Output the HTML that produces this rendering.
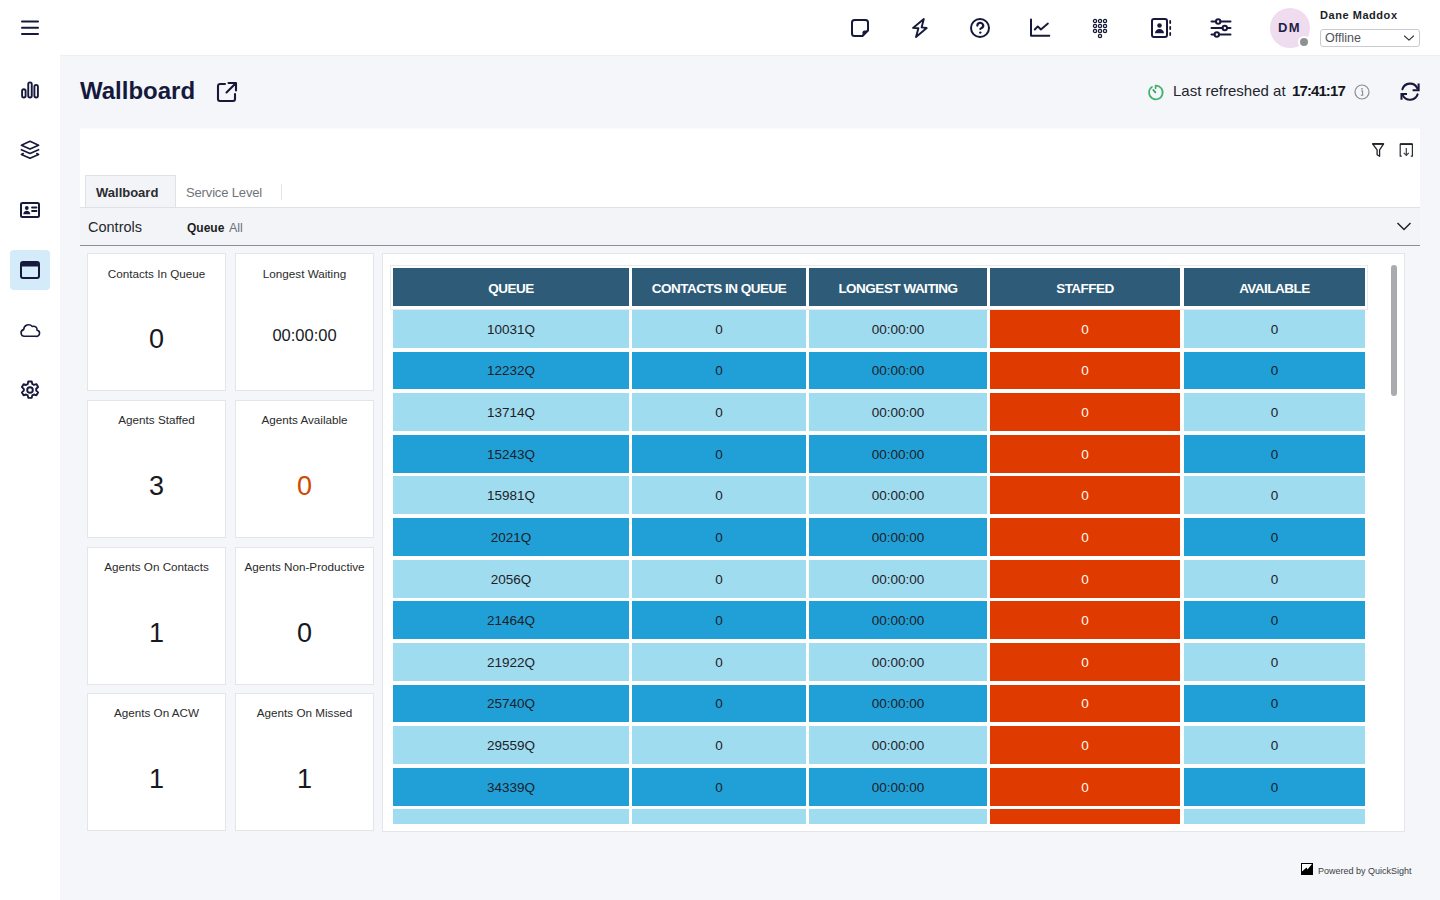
<!DOCTYPE html>
<html><head><meta charset="utf-8">
<style>
*{box-sizing:border-box;margin:0;padding:0}
html,body{width:1440px;height:900px;overflow:hidden;background:#f5f6f9;font-family:"Liberation Sans",sans-serif;color:#16193b}
.abs{position:absolute}
#top{position:absolute;left:0;top:0;width:1440px;height:56px;background:#fff;border-bottom:1px solid #eeeff1}
#side{position:absolute;left:0;top:55px;width:60px;height:845px;background:#fff}
svg{position:absolute;overflow:visible}
.ic{fill:none;stroke:#16193b;stroke-width:2;stroke-linecap:round;stroke-linejoin:round}
.txt{position:absolute;white-space:nowrap;line-height:1}
#card{position:absolute;left:80px;top:129px;width:1340px;height:79px;background:#fff;box-shadow:0 -1px 0 #f9fafb}
#ctrl{position:absolute;left:80px;top:207px;width:1340px;height:39px;background:#f3f4f7;border-top:1px solid #dfe1e5;border-bottom:1px solid #8b8f96}
.kpi{position:absolute;background:#fff;border:1px solid #e3e5e8}
.kpi .t{position:absolute;left:0;right:0;text-align:center;font-size:11.7px;color:#2b2b2b;white-space:nowrap;line-height:1}
.kpi .v{position:absolute;left:0;right:0;text-align:center;color:#16191f;white-space:nowrap;line-height:1}
#tbl{position:absolute;left:382px;top:253px;width:1023px;height:579px;background:#fff;border:1px solid #e3e5e8}
.c{position:absolute;text-align:center;font-size:13.5px;color:#1d2127;white-space:nowrap}
.h{position:absolute;text-align:center;font-size:13.5px;letter-spacing:-.5px;font-weight:bold;color:#fff;background:#2d5b78;white-space:nowrap}

</style></head>
<body>
<div id="top"></div>
<svg style="left:20px;top:19px" width="20" height="18" viewBox="0 0 20 18"><path class="ic" d="M2 2.4h16M2 8.7h16M2 15h16"/></svg>
<svg style="left:850px;top:18px" width="20" height="20" viewBox="0 0 20 20"><path class="ic" d="M4.5 2h11a2.5 2.5 0 0 1 2.5 2.5v8l-5.5 5.5h-8A2.5 2.5 0 0 1 2 15.5v-11A2.5 2.5 0 0 1 4.5 2z"/><path d="M18 12.5h-3.5a2 2 0 0 0-2 2V18z" fill="#16193b"/></svg>
<svg style="left:910px;top:18px" width="20" height="20" viewBox="0 0 20 20"><path class="ic" style="stroke-width:1.9" d="M13.8 1 L3 9.9 L8.4 10.2 L6 19 L16.7 10 L11.6 9.4 Z"/></svg>
<svg style="left:970px;top:18px" width="20" height="20" viewBox="0 0 20 20"><circle class="ic" cx="10" cy="10" r="9"/><path class="ic" style="stroke-width:2.2" d="M7.4 7.6a2.9 2.7 0 1 1 4.3 2.3c-.9.5-1.4.7-1.4 1.1"/><circle cx="10.3" cy="14.6" r="1.2" fill="#16193b"/></svg>
<svg style="left:1030px;top:18px" width="20" height="20" viewBox="0 0 20 20"><path class="ic" d="M1 1.5v16.2h18.3"/><path class="ic" style="stroke-width:1.9" d="M4.8 11.5l3-3.1 3.1 3.1 7-5.9"/></svg>
<svg style="left:1092px;top:18px" width="16" height="21" viewBox="0 0 16 21"><g fill="none" stroke="#16193b" stroke-width="1.3"><circle cx="3" cy="3" r="1.6"/><circle cx="8" cy="3" r="1.6"/><circle cx="13" cy="3" r="1.6"/><circle cx="3" cy="8" r="1.6"/><circle cx="8" cy="8" r="1.6"/><circle cx="13" cy="8" r="1.6"/><circle cx="3" cy="13" r="1.6"/><circle cx="8" cy="13" r="1.6"/><circle cx="13" cy="13" r="1.6"/><circle cx="8" cy="18" r="1.6"/></g></svg>
<svg style="left:1150px;top:18px" width="22" height="20" viewBox="0 0 22 20"><rect class="ic" x="2" y="1" width="15" height="18" rx="2"/><circle cx="9.5" cy="7.5" r="2.3" fill="#16193b"/><path d="M5 15.2c0-2.6 2-4.3 4.5-4.3s4.5 1.7 4.5 4.3z" fill="#16193b"/><path class="ic" style="stroke-width:1.8" d="M20.2 3v2M20.2 9v2M20.2 15v2"/></svg>
<svg style="left:1210px;top:18px" width="22" height="20" viewBox="0 0 22 20"><path class="ic" d="M1.5 3.5h4.5M10.5 3.5h10M1.5 10h11M17 10h3.5M1.5 16.5h3M9 16.5h11.5"/><circle class="ic" cx="8.2" cy="3.5" r="2.2"/><circle class="ic" cx="14.8" cy="10" r="2.2"/><circle class="ic" cx="6.8" cy="16.5" r="2.2"/></svg>
<div class="abs" style="left:1270px;top:8px;width:40px;height:40px;border-radius:50%;background:#f0dcef"></div>
<div class="txt" style="left:1278px;top:21px;font-size:13px;font-weight:bold;color:#1d1f45;letter-spacing:1.4px">DM</div>
<div class="abs" style="left:1298px;top:36px;width:12px;height:12px;border-radius:50%;background:#8f9092;border:2.5px solid #fff"></div>
<div class="txt" style="left:1320px;top:10px;font-size:11px;font-weight:bold;color:#1b1c2a;letter-spacing:.55px">Dane Maddox</div>
<div class="abs" style="left:1320px;top:29px;width:100px;height:18px;border:1px solid #c9cbd0;border-radius:3px;background:#fff"></div>
<div class="txt" style="left:1325px;top:32px;font-size:12.5px;color:#50535a">Offline</div>
<svg style="left:1403px;top:33px" width="12" height="10" viewBox="0 0 12 10"><path class="ic" style="stroke-width:1.1;stroke:#333" d="M1.5 3l4.5 4.2L10.5 3"/></svg>
<div id="side"></div>
<div class="abs" style="left:10px;top:250px;width:40px;height:40px;border-radius:4px;background:#d4ecf9"></div>
<svg style="left:20px;top:80px" width="20" height="20" viewBox="0 0 20 20"><rect class="ic" style="stroke-width:1.9" x="2.1" y="9.3" width="3.5" height="8.3" rx="1.75"/><rect class="ic" style="stroke-width:1.9" x="8.25" y="2.4" width="3.5" height="15.2" rx="1.75"/><rect class="ic" style="stroke-width:1.9" x="14.4" y="4.9" width="3.5" height="12.7" rx="1.75"/></svg>
<svg style="left:20px;top:140px" width="20" height="20" viewBox="0 0 20 20"><path class="ic" style="stroke-width:1.6" d="M10 1.3l8.6 4L10 9.1 1.4 5.3z"/><path class="ic" style="stroke-width:1.6" d="M1.4 9.7L10 13.5l8.6-3.8"/><path class="ic" style="stroke-width:1.6" d="M3.2 13.5L1.4 14.4 10 18.3l8.6-3.9-1.8-.9"/></svg>
<svg style="left:20px;top:200px" width="20" height="20" viewBox="0 0 20 20"><rect class="ic" x="1" y="3" width="18" height="14" rx="1.5"/><circle cx="6.8" cy="8" r="1.9" fill="#16193b"/><path d="M3.3 14.3c0-2.3 1.6-3.6 3.5-3.6s3.5 1.3 3.5 3.6z" fill="#16193b"/><path class="ic" style="stroke-width:1.8" d="M12 7.5h4.5M12 11h4.5"/></svg>
<svg style="left:20px;top:260px" width="20" height="20" viewBox="0 0 20 20"><rect class="ic" x="1" y="2" width="18" height="16" rx="2"/><path d="M2 3.5a1.5 1.5 0 0 1 1.5-1.5h13a1.5 1.5 0 0 1 1.5 1.5V6.5H2z" fill="#16193b"/></svg>
<svg style="left:20px;top:320px" width="20" height="20" viewBox="0 0 20 20"><path class="ic" style="stroke-width:1.6" d="M4.3 16.3A3.4 3.4 0 0 1 3.7 9.6 A4.9 4.9 0 0 1 12.3 6.5 A3.4 3.4 0 0 1 17 10.2 A3.1 3.1 0 0 1 15.8 16.3Z"/></svg>
<svg style="left:20px;top:380px" width="20" height="20" viewBox="0 0 20 20"><path class="ic" style="stroke-width:1.9" d="M8.3 1.5h3.4l.6 2.5 1.6.9 2.5-.8 1.7 2.9-1.9 1.8v1.8l1.9 1.8-1.7 2.9-2.5-.8-1.6.9-.6 2.5H8.3l-.6-2.5-1.6-.9-2.5.8-1.7-2.9 1.9-1.8V8.9L1.9 7.1 3.6 4.2l2.5.8 1.6-.9z"/><circle class="ic" style="stroke-width:1.9" cx="10" cy="10" r="2.8"/></svg>
<div class="txt" style="left:80px;top:79px;font-size:24px;font-weight:bold;color:#151a3c">Wallboard</div>
<svg style="left:216px;top:81px" width="22" height="22" viewBox="0 0 22 22"><path class="ic" style="stroke-width:2.1" d="M9 3H4a2 2 0 0 0-2 2v13a2 2 0 0 0 2 2h13a2 2 0 0 0 2-2v-5"/><path class="ic" style="stroke-width:2.1" d="M12.5 2H20v7.5M19.5 2.5L10.5 11.5"/></svg>
<svg style="left:1147px;top:84px" width="17" height="17" viewBox="0 0 17 17"><path fill="none" stroke="#3db368" stroke-width="1.7" stroke-linecap="round" stroke-linejoin="round" d="M5 2.9A6.8 6.8 0 1 0 8.6 1.7v2.6"/><path fill="none" stroke="#3a9a5e" stroke-width="1.7" stroke-linecap="round" d="M8.4 8.4L6.3 6"/></svg>
<div class="txt" style="left:1173px;top:83px;font-size:15px;color:#22252d">Last refreshed at</div>
<div class="txt" style="left:1292px;top:83px;font-size:15px;font-weight:bold;color:#16181d;letter-spacing:-.9px">17:41:17</div>
<svg style="left:1354px;top:84px" width="16" height="16" viewBox="0 0 16 16"><circle cx="8" cy="8" r="7" fill="none" stroke="#8a8d93" stroke-width="1.2"/><circle cx="8" cy="4.8" r=".9" fill="#8a8d93"/><path d="M7 7h1.6v4.2M6.8 11.3h2.6" fill="none" stroke="#8a8d93" stroke-width="1.1"/></svg>
<svg style="left:1400px;top:82px" width="20" height="20" viewBox="0 0 20 20"><path class="ic" style="stroke-width:2.1" d="M2.4 7.3A8 8 0 0 1 17.3 6.2"/><path class="ic" style="stroke-width:2.1;stroke-linecap:butt;stroke-linejoin:miter" d="M18.6 1.4V8.3H12.6"/><path class="ic" style="stroke-width:2.1" d="M17.6 12.4A8 8 0 0 1 2.9 13.4"/><path class="ic" style="stroke-width:2.1;stroke-linecap:butt;stroke-linejoin:miter" d="M1.5 17.8V12H7"/></svg>
<div id="card"></div>
<svg style="left:1370px;top:142px" width="16" height="16" viewBox="0 0 16 16"><path fill="none" stroke="#1f2226" stroke-width="1.3" stroke-linejoin="round" d="M2.6 1.8h11L9.6 7.8v6.5L7.1 12.8V7.8z"/><path stroke="#1f2226" stroke-width="1.8" d="M2.6 1.9h11"/></svg>
<svg style="left:1398px;top:142px" width="16" height="16" viewBox="0 0 16 16"><path fill="none" stroke="#2a2d31" stroke-width="1.2" stroke-linejoin="round" d="M3.8 14.2H2.2V2h12.2v12.2h-1.6"/><path stroke="#1f2226" stroke-width="1.8" d="M2.2 2.1h12.2"/><path fill="none" stroke="#3a3d42" stroke-width="1.2" d="M8.3 6v7.5M5.8 10.8l2.5 2.6 2.5-2.6"/></svg>
<div class="abs" style="left:85px;top:175px;width:91px;height:33px;background:#f3f4f7;border:1px solid #dfe1e5;border-bottom:none"></div>
<div class="txt" style="left:96px;top:186px;font-size:13px;font-weight:bold;color:#2a2c30">Wallboard</div>
<div class="txt" style="left:186px;top:186px;font-size:13px;color:#6f7379;letter-spacing:-.15px">Service Level</div>
<div class="abs" style="left:281px;top:184px;width:1px;height:16px;background:#e3e5e8"></div>
<div id="ctrl"></div>
<div class="txt" style="left:88px;top:220px;font-size:14.5px;color:#24272d">Controls</div>
<div class="txt" style="left:187px;top:222px;font-size:12px;font-weight:bold;color:#1b1d22">Queue</div>
<div class="txt" style="left:229px;top:222px;font-size:12.5px;color:#6d7177">All</div>
<svg style="left:1395px;top:219px" width="18" height="14" viewBox="0 0 18 14"><path fill="none" stroke="#1f2226" stroke-width="1.5" d="M2.5 4l6.5 6.5L15.5 4"/></svg>
<div class="kpi" style="left:87px;top:253px;width:139px;height:138px"><div class="t" style="top:13.8px">Contacts In Queue</div><div class="v" style="top:71.8px;font-size:27px;color:#16191f">0</div></div>
<div class="kpi" style="left:235px;top:253px;width:139px;height:138px"><div class="t" style="top:13.8px">Longest Waiting</div><div class="v" style="top:72.6px;font-size:16.5px;color:#16191f">00:00:00</div></div>
<div class="kpi" style="left:87px;top:400px;width:139px;height:138px"><div class="t" style="top:12.8px">Agents Staffed</div><div class="v" style="top:71.8px;font-size:27px;color:#16191f">3</div></div>
<div class="kpi" style="left:235px;top:400px;width:139px;height:138px"><div class="t" style="top:12.8px">Agents Available</div><div class="v" style="top:71.8px;font-size:27px;color:#d04a02">0</div></div>
<div class="kpi" style="left:87px;top:547px;width:139px;height:138px"><div class="t" style="top:12.8px">Agents On Contacts</div><div class="v" style="top:71.8px;font-size:27px;color:#16191f">1</div></div>
<div class="kpi" style="left:235px;top:547px;width:139px;height:138px"><div class="t" style="top:12.8px">Agents Non-Productive</div><div class="v" style="top:71.8px;font-size:27px;color:#16191f">0</div></div>
<div class="kpi" style="left:87px;top:693px;width:139px;height:138px"><div class="t" style="top:12.8px">Agents On ACW</div><div class="v" style="top:71.8px;font-size:27px;color:#16191f">1</div></div>
<div class="kpi" style="left:235px;top:693px;width:139px;height:138px"><div class="t" style="top:12.8px">Agents On Missed</div><div class="v" style="top:71.8px;font-size:27px;color:#16191f">1</div></div>
<div id="tbl"></div>
<div class="abs" style="left:390px;top:265px;width:978px;height:45px;border:1px solid #e8eaee;background:#fff"></div>
<div class="h" style="left:393px;top:268px;width:236px;height:38px;line-height:42px">QUEUE</div>
<div class="h" style="left:632px;top:268px;width:174px;height:38px;line-height:42px">CONTACTS IN QUEUE</div>
<div class="h" style="left:809px;top:268px;width:178px;height:38px;line-height:42px">LONGEST WAITING</div>
<div class="h" style="left:990px;top:268px;width:190px;height:38px;line-height:42px">STAFFED</div>
<div class="h" style="left:1184px;top:268px;width:181px;height:38px;line-height:42px">AVAILABLE</div>
<div class="abs" style="left:382px;top:308px;width:1000px;height:516px;overflow:hidden">
<div class="c" style="left:11px;top:2px;width:236px;height:38px;line-height:39px;background:#a0dcef;color:#1d2127">10031Q</div>
<div class="c" style="left:250px;top:2px;width:174px;height:38px;line-height:39px;background:#a0dcef;color:#1d2127">0</div>
<div class="c" style="left:427px;top:2px;width:178px;height:38px;line-height:39px;background:#a0dcef;color:#1d2127">00:00:00</div>
<div class="c" style="left:608px;top:2px;width:190px;height:38px;line-height:39px;background:#df3b00;color:#fffaf2">0</div>
<div class="c" style="left:802px;top:2px;width:181px;height:38px;line-height:39px;background:#a0dcef;color:#1d2127">0</div>
<div class="c" style="left:11px;top:44px;width:236px;height:37px;line-height:38px;background:#21a0d8;color:#1d2127">12232Q</div>
<div class="c" style="left:250px;top:44px;width:174px;height:37px;line-height:38px;background:#21a0d8;color:#1d2127">0</div>
<div class="c" style="left:427px;top:44px;width:178px;height:37px;line-height:38px;background:#21a0d8;color:#1d2127">00:00:00</div>
<div class="c" style="left:608px;top:44px;width:190px;height:37px;line-height:38px;background:#df3b00;color:#fffaf2">0</div>
<div class="c" style="left:802px;top:44px;width:181px;height:37px;line-height:38px;background:#21a0d8;color:#1d2127">0</div>
<div class="c" style="left:11px;top:85px;width:236px;height:38px;line-height:39px;background:#a0dcef;color:#1d2127">13714Q</div>
<div class="c" style="left:250px;top:85px;width:174px;height:38px;line-height:39px;background:#a0dcef;color:#1d2127">0</div>
<div class="c" style="left:427px;top:85px;width:178px;height:38px;line-height:39px;background:#a0dcef;color:#1d2127">00:00:00</div>
<div class="c" style="left:608px;top:85px;width:190px;height:38px;line-height:39px;background:#df3b00;color:#fffaf2">0</div>
<div class="c" style="left:802px;top:85px;width:181px;height:38px;line-height:39px;background:#a0dcef;color:#1d2127">0</div>
<div class="c" style="left:11px;top:127px;width:236px;height:38px;line-height:39px;background:#21a0d8;color:#1d2127">15243Q</div>
<div class="c" style="left:250px;top:127px;width:174px;height:38px;line-height:39px;background:#21a0d8;color:#1d2127">0</div>
<div class="c" style="left:427px;top:127px;width:178px;height:38px;line-height:39px;background:#21a0d8;color:#1d2127">00:00:00</div>
<div class="c" style="left:608px;top:127px;width:190px;height:38px;line-height:39px;background:#df3b00;color:#fffaf2">0</div>
<div class="c" style="left:802px;top:127px;width:181px;height:38px;line-height:39px;background:#21a0d8;color:#1d2127">0</div>
<div class="c" style="left:11px;top:168px;width:236px;height:38px;line-height:39px;background:#a0dcef;color:#1d2127">15981Q</div>
<div class="c" style="left:250px;top:168px;width:174px;height:38px;line-height:39px;background:#a0dcef;color:#1d2127">0</div>
<div class="c" style="left:427px;top:168px;width:178px;height:38px;line-height:39px;background:#a0dcef;color:#1d2127">00:00:00</div>
<div class="c" style="left:608px;top:168px;width:190px;height:38px;line-height:39px;background:#df3b00;color:#fffaf2">0</div>
<div class="c" style="left:802px;top:168px;width:181px;height:38px;line-height:39px;background:#a0dcef;color:#1d2127">0</div>
<div class="c" style="left:11px;top:210px;width:236px;height:38px;line-height:39px;background:#21a0d8;color:#1d2127">2021Q</div>
<div class="c" style="left:250px;top:210px;width:174px;height:38px;line-height:39px;background:#21a0d8;color:#1d2127">0</div>
<div class="c" style="left:427px;top:210px;width:178px;height:38px;line-height:39px;background:#21a0d8;color:#1d2127">00:00:00</div>
<div class="c" style="left:608px;top:210px;width:190px;height:38px;line-height:39px;background:#df3b00;color:#fffaf2">0</div>
<div class="c" style="left:802px;top:210px;width:181px;height:38px;line-height:39px;background:#21a0d8;color:#1d2127">0</div>
<div class="c" style="left:11px;top:252px;width:236px;height:38px;line-height:39px;background:#a0dcef;color:#1d2127">2056Q</div>
<div class="c" style="left:250px;top:252px;width:174px;height:38px;line-height:39px;background:#a0dcef;color:#1d2127">0</div>
<div class="c" style="left:427px;top:252px;width:178px;height:38px;line-height:39px;background:#a0dcef;color:#1d2127">00:00:00</div>
<div class="c" style="left:608px;top:252px;width:190px;height:38px;line-height:39px;background:#df3b00;color:#fffaf2">0</div>
<div class="c" style="left:802px;top:252px;width:181px;height:38px;line-height:39px;background:#a0dcef;color:#1d2127">0</div>
<div class="c" style="left:11px;top:293px;width:236px;height:38px;line-height:39px;background:#21a0d8;color:#1d2127">21464Q</div>
<div class="c" style="left:250px;top:293px;width:174px;height:38px;line-height:39px;background:#21a0d8;color:#1d2127">0</div>
<div class="c" style="left:427px;top:293px;width:178px;height:38px;line-height:39px;background:#21a0d8;color:#1d2127">00:00:00</div>
<div class="c" style="left:608px;top:293px;width:190px;height:38px;line-height:39px;background:#df3b00;color:#fffaf2">0</div>
<div class="c" style="left:802px;top:293px;width:181px;height:38px;line-height:39px;background:#21a0d8;color:#1d2127">0</div>
<div class="c" style="left:11px;top:335px;width:236px;height:38px;line-height:39px;background:#a0dcef;color:#1d2127">21922Q</div>
<div class="c" style="left:250px;top:335px;width:174px;height:38px;line-height:39px;background:#a0dcef;color:#1d2127">0</div>
<div class="c" style="left:427px;top:335px;width:178px;height:38px;line-height:39px;background:#a0dcef;color:#1d2127">00:00:00</div>
<div class="c" style="left:608px;top:335px;width:190px;height:38px;line-height:39px;background:#df3b00;color:#fffaf2">0</div>
<div class="c" style="left:802px;top:335px;width:181px;height:38px;line-height:39px;background:#a0dcef;color:#1d2127">0</div>
<div class="c" style="left:11px;top:377px;width:236px;height:37px;line-height:38px;background:#21a0d8;color:#1d2127">25740Q</div>
<div class="c" style="left:250px;top:377px;width:174px;height:37px;line-height:38px;background:#21a0d8;color:#1d2127">0</div>
<div class="c" style="left:427px;top:377px;width:178px;height:37px;line-height:38px;background:#21a0d8;color:#1d2127">00:00:00</div>
<div class="c" style="left:608px;top:377px;width:190px;height:37px;line-height:38px;background:#df3b00;color:#fffaf2">0</div>
<div class="c" style="left:802px;top:377px;width:181px;height:37px;line-height:38px;background:#21a0d8;color:#1d2127">0</div>
<div class="c" style="left:11px;top:418px;width:236px;height:38px;line-height:39px;background:#a0dcef;color:#1d2127">29559Q</div>
<div class="c" style="left:250px;top:418px;width:174px;height:38px;line-height:39px;background:#a0dcef;color:#1d2127">0</div>
<div class="c" style="left:427px;top:418px;width:178px;height:38px;line-height:39px;background:#a0dcef;color:#1d2127">00:00:00</div>
<div class="c" style="left:608px;top:418px;width:190px;height:38px;line-height:39px;background:#df3b00;color:#fffaf2">0</div>
<div class="c" style="left:802px;top:418px;width:181px;height:38px;line-height:39px;background:#a0dcef;color:#1d2127">0</div>
<div class="c" style="left:11px;top:460px;width:236px;height:38px;line-height:39px;background:#21a0d8;color:#1d2127">34339Q</div>
<div class="c" style="left:250px;top:460px;width:174px;height:38px;line-height:39px;background:#21a0d8;color:#1d2127">0</div>
<div class="c" style="left:427px;top:460px;width:178px;height:38px;line-height:39px;background:#21a0d8;color:#1d2127">00:00:00</div>
<div class="c" style="left:608px;top:460px;width:190px;height:38px;line-height:39px;background:#df3b00;color:#fffaf2">0</div>
<div class="c" style="left:802px;top:460px;width:181px;height:38px;line-height:39px;background:#21a0d8;color:#1d2127">0</div>
<div class="c" style="left:11px;top:501px;width:236px;height:38px;line-height:39px;background:#a0dcef;color:rgba(255,255,255,.55)">35000Q</div>
<div class="c" style="left:250px;top:501px;width:174px;height:38px;line-height:39px;background:#a0dcef;color:rgba(255,255,255,.55)">0</div>
<div class="c" style="left:427px;top:501px;width:178px;height:38px;line-height:39px;background:#a0dcef;color:rgba(255,255,255,.55)">00:00:00</div>
<div class="c" style="left:608px;top:501px;width:190px;height:38px;line-height:39px;background:#df3b00;color:rgba(255,255,255,.55)">0</div>
<div class="c" style="left:802px;top:501px;width:181px;height:38px;line-height:39px;background:#a0dcef;color:rgba(255,255,255,.55)">0</div>
</div>
<div class="abs" style="left:1391px;top:265px;width:6px;height:131px;border-radius:3px;background:#a9abae"></div>
<svg style="left:1301px;top:863px" width="13" height="12" viewBox="0 0 13 12"><rect x="0" y="0" width="12" height="12" fill="#000"/><path d="M1 1h10L6.5 6.5 5.6 4.6 1 8.5z" fill="#fff"/></svg>
<div class="txt" style="left:1318px;top:866.6px;font-size:9px;color:#3a3d44">Powered by QuickSight</div>
</body></html>
